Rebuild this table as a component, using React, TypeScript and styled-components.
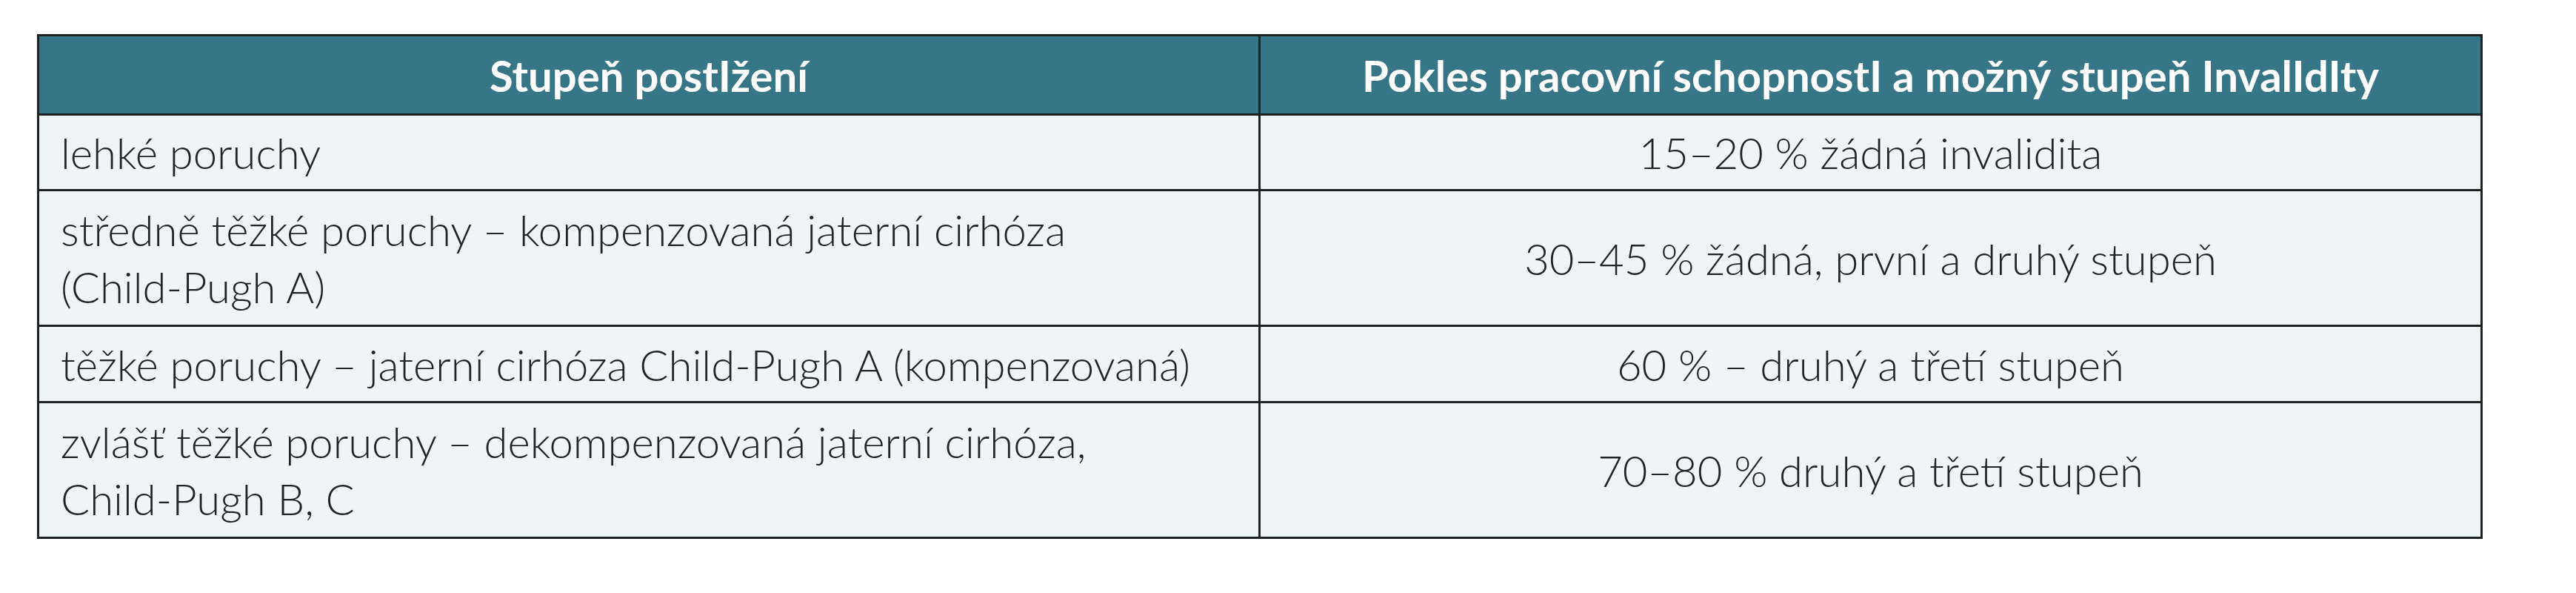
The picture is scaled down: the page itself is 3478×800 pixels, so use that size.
import { Fragment } from "react";
import { createGlobalStyle, styled } from "styled-components";

type Row = {
  left: string[];
  right: string;
};

// radky tabulky: levy sloupec muze mit vic radku textu
const rows: Row[] = [
  { left: ["lehké poruchy"], right: "15–20 % žádná invalidita" },
  {
    left: ["středně těžké poruchy – kompenzovaná jaterní cirhóza", "(Child-Pugh A)"],
    right: "30–45 % žádná, první a druhý stupeň",
  },
  {
    left: ["těžké poruchy – jaterní cirhóza Child-Pugh A (kompenzovaná)"],
    right: "60 % – druhý a třetí stupeň",
  },
  {
    left: ["zvlášť těžké poruchy – dekompenzovaná jaterní cirhóza,", "Child-Pugh B, C"],
    right: "70–80 % druhý a třetí stupeň",
  },
];

const App = () => {
  return (
    <>
      <GlobalStyle />
      <StPage>
        <StTable>
          <StHeadCell>Stupeň postIžení</StHeadCell>
          <StHeadCell>Pokles pracovní schopnostI a možný stupeň InvalIdIty</StHeadCell>
          {rows.map((row) => (
            <Fragment key={row.right}>
              <StCell align="left">
                <span>
                  {row.left.map((line, i) => (
                    <span key={i}>
                      {i > 0 && <br />}
                      {line}
                    </span>
                  ))}
                </span>
              </StCell>
              <StCell align="center">{row.right}</StCell>
            </Fragment>
          ))}
        </StTable>
      </StPage>
    </>
  );
};

export default App;

const GlobalStyle = createGlobalStyle`
  html, body {
    margin: 0;
    padding: 0;
    background: #ffffff;
  }
`;

const StPage = styled.div`
  padding: 46px 0 0 50px;
  font-family: Lato, "Liberation Sans", sans-serif;
`;

const StTable = styled.div`
  display: grid;
  grid-template-columns: 1646px 1647px;
  grid-template-rows: 104px 99px 180px 100px 180px;
  gap: 3px;
  padding: 3px;
  width: max-content;
  background: #1d2323;
`;

const StHeadCell = styled.div`
  display: flex;
  align-items: center;
  justify-content: center;
  background: #377686;
  color: #ffffff;
  font-weight: 700;
  font-size: 58px;
  line-height: 77px;
  white-space: nowrap;
`;

const StCell = styled.div<{ align: "left" | "center" }>`
  display: flex;
  align-items: center;
  justify-content: ${(props) => (props.align === "center" ? "center" : "flex-start")};
  padding: 0 29px;
  background: #edf5f6;
  color: #1f2424;
  font-weight: 300;
  font-size: 58px;
  line-height: 77px;
  white-space: nowrap;
`;
